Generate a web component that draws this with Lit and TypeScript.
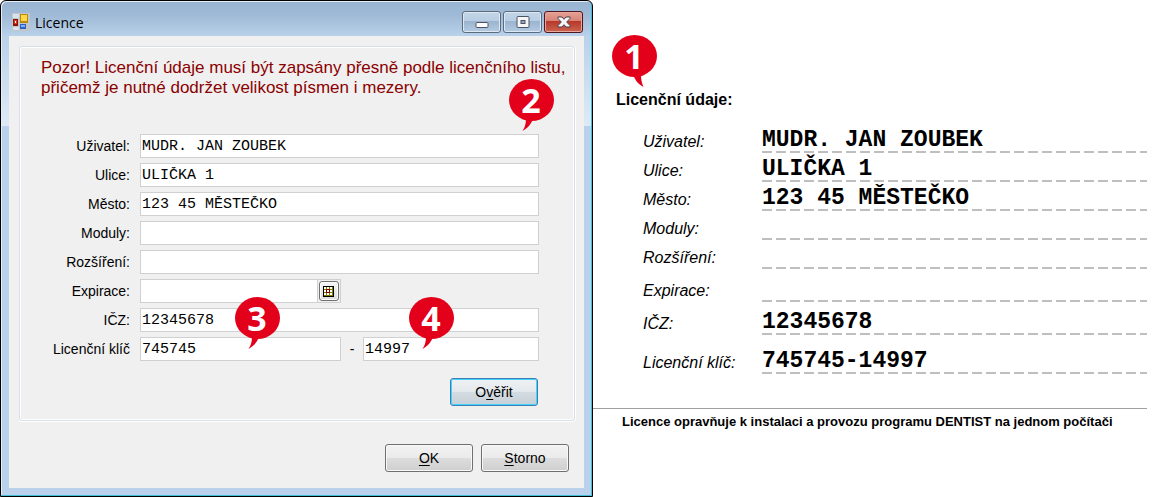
import { LitElement, html, css, svg } from "lit";
import { customElement, property } from "lit/decorators.js";

@customElement("number-badge")
class NumberBadge extends LitElement {
  @property() value = "1";
  @property({ type: Boolean }) mirrored = false;

  static styles = css`
    :host { display: block; width: 45px; height: 52px; pointer-events: none; }
    .bubble { display: block; width: 100%; height: 100%; overflow: visible; }
    .digit { font: 700 34px "Open Sans", "Noto Sans", sans-serif; fill: #fff; text-anchor: middle; }
    .shape { fill: #e2001a; }
  `;

  render() {
    const tail = this.mirrored
      ? svg`<path class="shape" d="M21 39C23 45 26 49 31.500 52C30 48 29 45 29 39Z"/>`
      : svg`<path class="shape" d="M24.500 39C22 45 19 49 13.500 52C16 48 17 45 17 39Z"/>`;
    return html`<svg class="bubble" viewBox="0 0 45 52">
      <ellipse class="shape" cx="22.5" cy="21" rx="22.5" ry="21"></ellipse>
      ${tail}
      <text class="digit" x="22" y="34">${this.value}</text>
    </svg>`;
  }
}

@customElement("licence-dialog")
class LicenceDialog extends LitElement {
  static styles = css`
    * { box-sizing: border-box; }
    :host { display: block; font: 14px/16px "Liberation Sans", Arial, sans-serif; color: #000; }
    .window {
      position: relative; height: 100%; border: 1px solid #000; border-radius: 6px 6px 0 0;
      padding: 0 7px 8px; 
      background:
        linear-gradient(#99b4d1, #9fbad6 40%, #b9d1ea 100%) 0 0 / 100% 35px no-repeat,
        linear-gradient(#b9d1ea, #dfeaf6) 0 35px / 100% 90px no-repeat,
        #b9d1ea;
      box-shadow: inset -1px -1px 0 #3fc0d8, inset 1px 1px 0 #e6eff8;
      display: flex; flex-direction: column;
    }
    .titlebar { display: flex; height: 35px; padding: 10px 2px 0 4px; align-items: flex-start; }
    .app-icon { width: 18px; height: 18px; margin-top: 2px; }
    .title { flex: 1; margin: 0 0 0 5px; font: 14px/24px "Open Sans", "Noto Sans", sans-serif; }
    .controls { display: flex; gap: 2px; }
    .control {
      width: 39px; height: 22px; padding: 0; border: 1px solid #5b6b80; border-radius: 3px;
      background: linear-gradient(#c3d5e8, #b8cde3 45%, #9bb4cf 46%, #b3cae2);
      box-shadow: inset 0 0 0 1px #dde8f3; display: grid; place-items: center;
    }
    .close {
      border-color: #4d1620; box-shadow: inset 0 0 0 1px #e7a79c;
      background: linear-gradient(#e6a195, #d68476 45%, #b7382a 46%, #cb6450);
    }
    .client { flex: 1; margin: 0 1px 0 1px; padding: 10px 9px 16px 10px; background: #f0f0f0; }
    .group {
      margin: 0; padding: 11px 35px 14px 0; border: 1px solid #d5dfe5; border-radius: 3px;
      box-shadow: inset 0 0 0 1px #fff, 0 1px 0 #fff, 1px 0 0 #fff; position: relative;
    }
    .warning { margin: 0 -34px 36px 21px; font-size: 17px; line-height: 20px; color: #8b0000; }
    .rows { display: grid; gap: 5px; }
    .row { display: grid; grid-template-columns: 110px minmax(0, 1fr); column-gap: 10px; align-items: center; }
    .label { text-align: right; white-space: nowrap; }
    .input {
      width: 100%; min-width: 0; height: 24px; padding: 0 1px; border: 1px solid #d0d0d0; border-radius: 0;
      background: #fff; color: #000; font: 15px/20px "Liberation Mono", "Courier New", monospace; outline: none;
    }
    .split { display: grid; grid-template-columns: minmax(0, 201fr) 22px minmax(0, 176fr); align-items: center; text-align: center; }
    .picker { display: flex; height: 24px; border: 1px solid #d0d0d0; background: #f0f0f0; }
    .picker .input { flex: 1; height: 22px; border-width: 0 1px 0 0; }
    .calendar {
      width: 20px; height: 20px; margin: 1px; padding: 0; border: 1px solid #707070; border-radius: 3px;
      background: linear-gradient(#f6f6f6, #dcdcdc); box-shadow: inset 0 0 0 1px #fcfcfc; display: grid; place-items: center;
    }
    .calendar-icon { display: block; margin-left: -1px; }
    .button {
      width: 88px; height: 28px; padding: 0; border: 1px solid #707070; border-radius: 3px; color: #000;
      font: 14px/16px "Liberation Sans", Arial, sans-serif;
      background: linear-gradient(#f2f2f2, #ebebeb 48%, #dddddd 49%, #cfcfcf);
      box-shadow: inset 0 0 0 1px #f8f8f8;
    }
    .default {
      border-color: #3c7fb1; box-shadow: inset 0 0 0 1px #46d2fa;
      background: linear-gradient(#eff2f4, #e4e9ed 48%, #d4dce2 49%, #c6d0d8);
    }
    .key { text-decoration: underline; text-underline-offset: 2px; }
    .verify { display: flex; justify-content: flex-end; padding: 17px 1px 0 0; }
    .actions { display: flex; justify-content: flex-end; gap: 8px; padding: 23px 6px 0 0; }
    .badge { position: absolute; }
    .badge-owner { top: 32px; right: 20px; }
    .key-part { position: relative; }
    .badge-key { right: 61px; bottom: 12px; }
    .badge-code { left: 46px; bottom: 12px; }
  `;

  private textRow(id: string, label: string, value = "") {
    return html`<div class="row">
      <label class="label" for=${id}>${label}</label>
      <input class="input" id=${id} type="text" .value=${value} />
    </div>`;
  }

  render() {
    return html`<section class="window" aria-labelledby="title">
      <header class="titlebar">
        <svg class="app-icon" viewBox="0 0 18 18">
          <path fill="#c3c6c8" d="M0 0h18v18H0z"/>
          <path fill="#d8e3ec" d="M1 1h6v4H1zM1 14h6v3H1z"/>
          <path fill="#b98a10" d="M8 1h8v9H8z"/><path fill="#ffd84a" d="M9 2h6v6H9z"/>
          <path fill="#8d1507" d="M1 6h5v7H1z"/><path fill="#d8371f" d="M2 7h3v4H2z"/><path fill="#fff" d="M3 8h1v2H3z"/>
          <path fill="#2d62c4" d="M8 11h6v5H8z"/><path fill="#7fb0f5" d="M9 12h4v2H9z"/>
        </svg>
        <h1 class="title" id="title">Licence</h1>
        <div class="controls">
          <button class="control" type="button" aria-label="Minimalizovat">
            <svg width="14" height="14" viewBox="0 0 14 14"><rect x="1" y="7.500" width="12" height="5" rx="1" fill="#fff" stroke="#4a5462"/></svg>
          </button>
          <button class="control" type="button" aria-label="Maximalizovat">
            <svg width="14" height="14" viewBox="0 0 14 14"><rect x="1" y="1.500" width="12" height="11" rx="1" fill="#f6f6f6" stroke="#4a5462"/><rect x="5" y="5.500" width="4" height="3" fill="#8fa9c6" stroke="#4a5462"/></svg>
          </button>
          <button class="control close" type="button" aria-label="Zavřít">
            <svg width="14" height="14" viewBox="0 0 14 14"><path fill="#f6f6f6" stroke="#4a3f4b" stroke-linejoin="round" d="M1 2h4l2 2.300L9 2h4v1.500L9.700 7l3.300 3.500V12H9L7 9.700 5 12H1v-1.500L4.300 7 1 3.500z"/></svg>
          </button>
        </div>
      </header>
      <form class="client" @submit=${(e: Event) => e.preventDefault()}>
        <div class="group">
          <p class="warning">Pozor! Licenční údaje musí být zapsány přesně podle licenčního listu, přičemž je nutné dodržet velikost písmen i mezery.</p>
          <number-badge class="badge badge-owner" value="2"></number-badge>
          <div class="rows">
            ${this.textRow("user", "Uživatel:", "MUDR. JAN ZOUBEK")}
            ${this.textRow("street", "Ulice:", "ULIČKA 1")}
            ${this.textRow("city", "Město:", "123 45 MĚSTEČKO")}
            ${this.textRow("modules", "Moduly:")}
            ${this.textRow("extensions", "Rozšíření:")}
            <div class="row">
              <label class="label" for="expiry">Expirace:</label>
              <div class="split">
                <div class="picker">
                  <input class="input" id="expiry" type="text" />
                  <button class="calendar" type="button" aria-label="Kalendář">
                    <svg class="calendar-icon" width="11" height="11" viewBox="0 0 11 11" shape-rendering="crispEdges">
                      <path fill="#000" d="M0 0h11v11H0z"/><path fill="#808000" d="M1 1h9v9H1z"/>
                      <path fill="#fff" d="M1 1h2v2H1zM4 1h2v2H4zM7 1h2v2H7zM1 4h2v2H1zM7 4h2v2H7zM1 7h2v2H1zM4 7h2v2H4zM7 7h2v2H7z"/>
                      <path fill="#800000" d="M3 3h4v4H3z"/><path fill="#fff" d="M4 4h2v2H4z"/>
                    </svg>
                  </button>
                </div>
              </div>
            </div>
            ${this.textRow("icz", "IČZ:", "12345678")}
            <div class="row">
              <label class="label" for="key">Licenční klíč</label>
              <div class="split">
                <div class="key-part">
                  <input class="input" id="key" type="text" .value=${"745745"} />
                  <number-badge class="badge badge-key" value="3"></number-badge>
                </div>
                <span>-</span>
                <div class="key-part">
                  <input class="input" id="code" type="text" aria-label="Licenční klíč, druhá část" .value=${"14997"} />
                  <number-badge class="badge badge-code" value="4"></number-badge>
                </div>
              </div>
            </div>
          </div>
          <div class="verify"><button class="button default" type="submit">O<span class="key">v</span>ěřit</button></div>
        </div>
        <div class="actions">
          <button class="button" type="button"><span class="key">O</span>K</button>
          <button class="button" type="button"><span class="key">S</span>torno</button>
        </div>
      </form>
    </section>`;
  }
}

const SHEET_ROWS = [
  { label: "Uživatel:", value: "MUDR. JAN ZOUBEK", size: "normal" },
  { label: "Ulice:", value: "ULIČKA 1", size: "normal" },
  { label: "Město:", value: "123 45 MĚSTEČKO", size: "normal" },
  { label: "Moduly:", value: "", size: "normal" },
  { label: "Rozšíření:", value: "", size: "normal" },
  { label: "Expirace:", value: "", size: "tall" },
  { label: "IČZ:", value: "12345678", size: "tall" },
  { label: "Licenční klíč:", value: "745745-14997", size: "last" },
];

@customElement("licence-sheet")
class LicenceSheet extends LitElement {
  static styles = css`
    * { box-sizing: border-box; }
    :host { display: block; font: 16px/20px "Liberation Sans", Arial, sans-serif; color: #000; }
    .sheet { position: relative; padding: 90px 9px 0 0; }
    .heading { margin: 0 0 14px 23px; font-size: 16px; line-height: 20px; font-weight: 700; }
    .data { margin: 0; padding-left: 50px; }
    .line { display: grid; grid-template-columns: 119px minmax(0, 1fr); align-items: end; }
    .normal { height: 29px; }
    .tall { height: 33px; }
    .last { height: 39px; }
    .term { font-style: italic; white-space: nowrap; padding-bottom: 1px; }
    .value {
      margin: 0; height: 26px; font: 700 23px/26px "Liberation Mono", "Courier New", monospace; white-space: nowrap;
      background: repeating-linear-gradient(90deg, #bfbfbf 0 10px, transparent 10px 14px) 0 100% / 100% 2px no-repeat;
    }
    .note { margin: 34px 0 0; padding: 4px 0 0 29px; border-top: 1px solid #a0a0a0; font-size: 13px; line-height: 18px; font-weight: 700; }
    .badge { position: absolute; left: 19px; top: 35px; }
  `;

  render() {
    return html`<section class="sheet">
      <number-badge class="badge" value="1" mirrored></number-badge>
      <h2 class="heading">Licenční údaje:</h2>
      <dl class="data">
        ${SHEET_ROWS.map((r) => html`<div class="line ${r.size}"><dt class="term">${r.label}</dt><dd class="value">${r.value}</dd></div>`)}
      </dl>
      <p class="note">Licence opravňuje k instalaci a provozu programu DENTIST na jednom počítači</p>
    </section>`;
  }
}

@customElement("app-root")
class AppRoot extends LitElement {
  static styles = css`
    :host { display: block; background: #fff; }
    .page { display: grid; grid-template-columns: minmax(0, 593fr) minmax(0, 563fr); }
  `;

  render() {
    return html`<main class="page">
      <licence-dialog></licence-dialog>
      <licence-sheet></licence-sheet>
    </main>`;
  }
}
